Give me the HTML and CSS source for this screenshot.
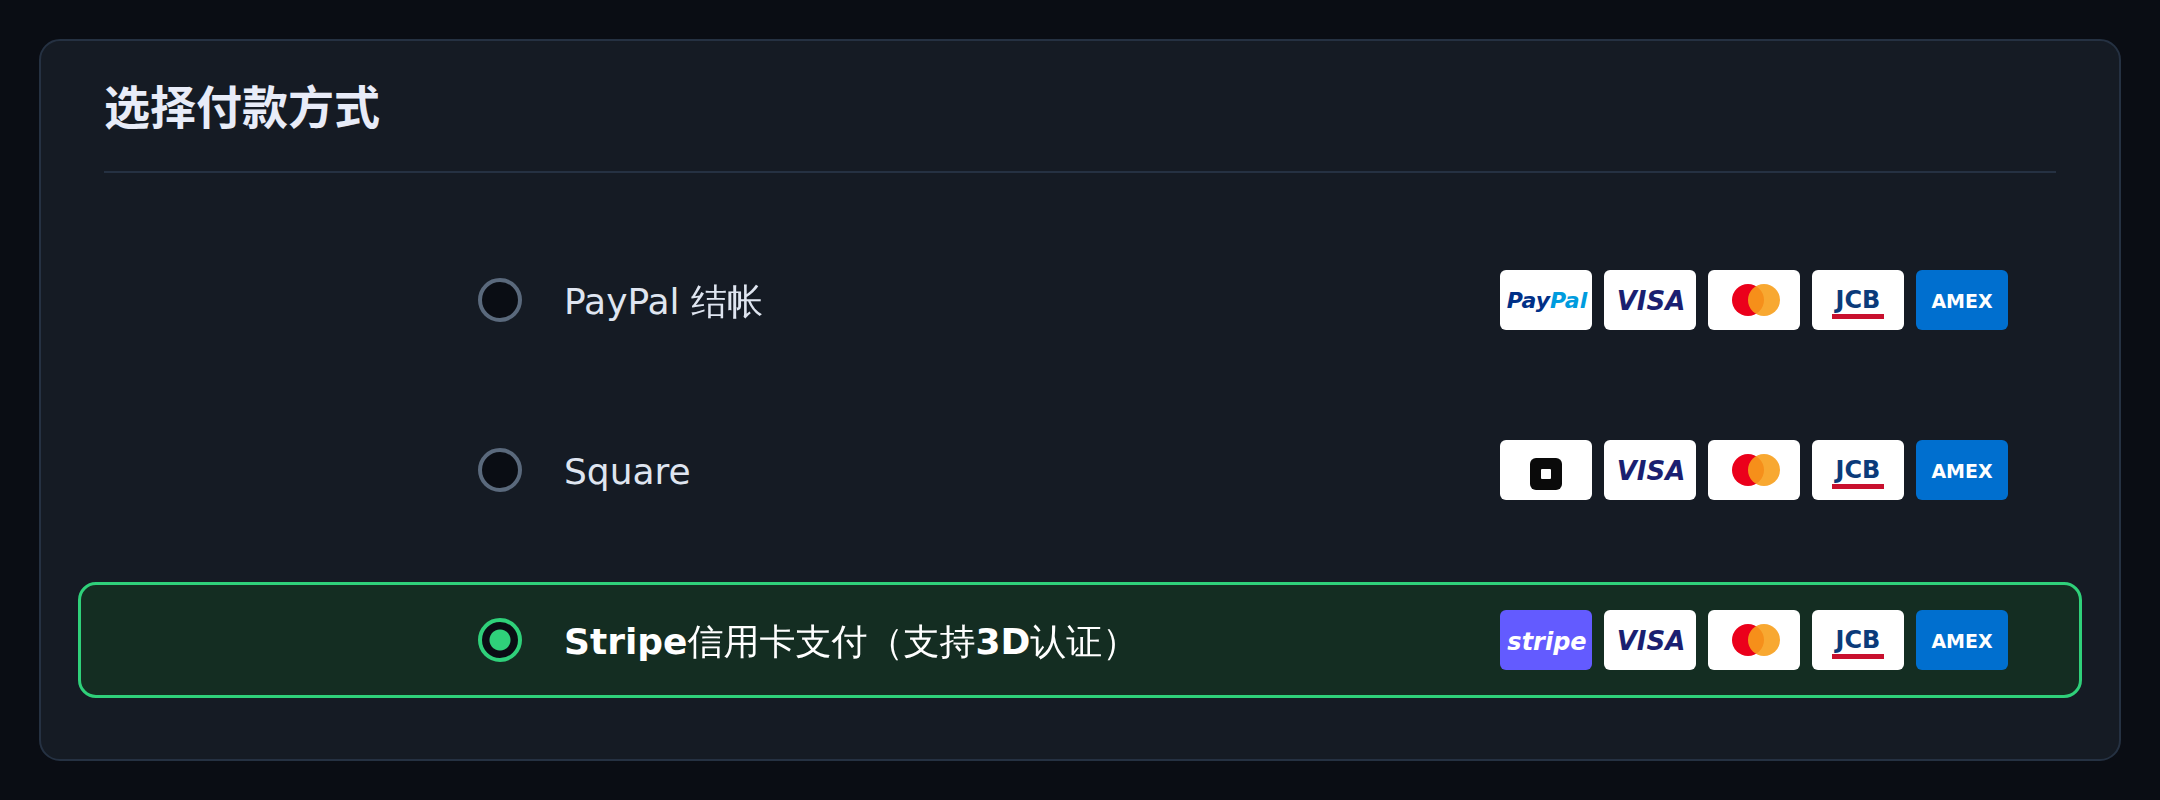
FILE: index.html
```
<!DOCTYPE html>
<html lang="zh-CN">
<head>
<meta charset="utf-8">
<meta name="viewport" content="width=device-width, initial-scale=1">
<title>选择付款方式</title>
<link rel="stylesheet" href="styles.css">
</head>
<body>
<main class="card">
  <header class="card-header">
    <h1 class="title" id="pay-title">选择付款方式</h1>
  </header>
  <form class="methods" role="radiogroup" aria-labelledby="pay-title">
    <label class="method">
      <input class="radio" type="radio" name="method" value="paypal">
      <span class="name">PayPal 结帐</span>
      <span class="brands">
        <svg class="brand" viewBox="0 0 92 60"><text class="paypal" x="47" y="38">Pay<tspan class="pal">Pal</tspan></text></svg>
        <svg class="brand" viewBox="0 0 92 60"><text class="visa" x="47" y="40">VISA</text></svg>
        <svg class="brand" viewBox="0 0 92 60" role="img" aria-label="Mastercard"><circle class="mc-red" cx="40" cy="30" r="16"/><circle class="mc-gold" cx="56" cy="30" r="16"/></svg>
        <svg class="brand" viewBox="0 0 92 60"><text class="jcb" x="46" y="38">JCB</text><rect class="jcb-bar" x="20" y="44" width="52" height="5"/></svg>
        <svg class="brand brand-amex" viewBox="0 0 92 60"><text class="amex" x="46" y="38">AMEX</text></svg>
      </span>
    </label>
    <label class="method">
      <input class="radio" type="radio" name="method" value="square">
      <span class="name">Square</span>
      <span class="brands">
        <svg class="brand" viewBox="0 0 92 60" role="img" aria-label="Square"><rect class="sq-outer" x="30" y="18" width="32" height="32" rx="6"/><rect class="sq-inner" x="41" y="29" width="10" height="10" rx="1"/></svg>
        <svg class="brand" viewBox="0 0 92 60"><text class="visa" x="47" y="40">VISA</text></svg>
        <svg class="brand" viewBox="0 0 92 60" role="img" aria-label="Mastercard"><circle class="mc-red" cx="40" cy="30" r="16"/><circle class="mc-gold" cx="56" cy="30" r="16"/></svg>
        <svg class="brand" viewBox="0 0 92 60"><text class="jcb" x="46" y="38">JCB</text><rect class="jcb-bar" x="20" y="44" width="52" height="5"/></svg>
        <svg class="brand brand-amex" viewBox="0 0 92 60"><text class="amex" x="46" y="38">AMEX</text></svg>
      </span>
    </label>
    <label class="method">
      <input class="radio" type="radio" name="method" value="stripe" checked>
      <span class="name">Stripe信用卡支付（支持3D认证）</span>
      <span class="brands">
        <svg class="brand brand-stripe" viewBox="0 0 92 60"><text class="stripe" x="47" y="40">stripe</text></svg>
        <svg class="brand" viewBox="0 0 92 60"><text class="visa" x="47" y="40">VISA</text></svg>
        <svg class="brand" viewBox="0 0 92 60" role="img" aria-label="Mastercard"><circle class="mc-red" cx="40" cy="30" r="16"/><circle class="mc-gold" cx="56" cy="30" r="16"/></svg>
        <svg class="brand" viewBox="0 0 92 60"><text class="jcb" x="46" y="38">JCB</text><rect class="jcb-bar" x="20" y="44" width="52" height="5"/></svg>
        <svg class="brand brand-amex" viewBox="0 0 92 60"><text class="amex" x="46" y="38">AMEX</text></svg>
      </span>
    </label>
  </form>
</main>
</body>
</html>
```
FILE: styles.css
```
* {
  box-sizing: border-box;
}

body {
  margin: 0;
  padding: 39px;
  background: #0a0d14;
  font-family: "DejaVu Sans", "WenQuanYi Zen Hei", "Noto Sans CJK SC", sans-serif;
}

.card {
  padding: 0 37px 61px;
  border: 2px solid #253142;
  border-radius: 21px;
  background: #151b24;
}

.card-header {
  margin: 0 26px 69px;
  padding: 40px 0 36px;
  border-bottom: 2px solid #253142;
}

.title {
  margin: 0;
  color: #e8ecf8;
  font-family: "DejaVu Sans", "Droid Sans Fallback", "Noto Sans CJK SC", sans-serif;
  font-size: 46px;
  font-weight: 700;
  line-height: 54px;
}

.methods {
  display: flex;
  flex-direction: column;
  gap: 54px;
}

.method {
  display: flex;
  align-items: center;
  padding: 25px 71px 25px min(397px, 20%);
  border: 3px solid transparent;
  border-radius: 18px;
  color: #dfe5f0;
  cursor: pointer;
}

.method:has(.radio:checked) {
  border-color: #2fd07a;
  background: #142d22;
  color: #ffffff;
  font-weight: 700;
}

.radio {
  flex: none;
  width: 44px;
  height: 44px;
  margin: 0 42px 0 0;
  border: 4px solid #5a697c;
  border-radius: 50%;
  background: #0a0d14;
  appearance: none;
}

.radio:checked {
  border-color: #2fd07a;
  background: radial-gradient(circle, #2fd07a 10px, #0a0d14 11px);
}

.name {
  flex: 1;
  padding-top: 4px;
  font-size: 36px;
  line-height: 44px;
}

.brands {
  display: flex;
  gap: 12px;
}

.brand {
  width: 92px;
  height: 60px;
  border-radius: 6px;
  background: #ffffff;
  font-family: "DejaVu Sans", sans-serif;
  font-weight: 700;
  text-anchor: middle;
}

.brand-amex {
  background: #006fcf;
}

.brand-stripe {
  background: #635bff;
}

.paypal {
  fill: #003087;
  font-size: 22px;
  font-style: italic;
}

.pal {
  fill: #009cde;
}

.visa {
  fill: #1a1f71;
  font-size: 26px;
  font-style: italic;
}

.jcb {
  fill: #0b3b7a;
  font-size: 24px;
}

.jcb-bar {
  fill: #c8102e;
}

.amex {
  fill: #ffffff;
  font-size: 19px;
}

.stripe {
  fill: #ffffff;
  font-size: 24px;
  font-style: italic;
}

.mc-red {
  fill: #eb001b;
}

.mc-gold {
  fill: #f79e1b;
  opacity: 0.9;
}

.sq-outer {
  fill: #0a0a0a;
}

.sq-inner {
  fill: #ffffff;
}
```
